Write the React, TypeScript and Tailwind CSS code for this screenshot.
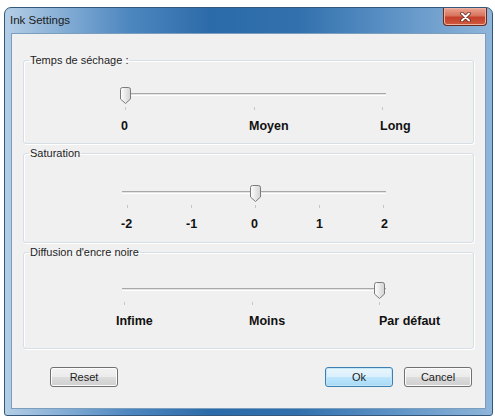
import React from 'react'

type SliderProps = {
    labels: string[]
    value: number
    first: number
    last: number
    tickPad: string
    labelCols: string
}

function Thumb() {
    return (
        <svg width="11" height="18" viewBox="0 0 11 18">
            <defs>
                <linearGradient id="thumbFill" x1="0" y1="0" x2="1" y2="0">
                    <stop offset="0" stopColor="#ffffff" />
                    <stop offset="1" stopColor="#d2d2d2" />
                </linearGradient>
            </defs>
            <path
                d="M0.5 2.5 Q0.5 0.5 2.5 0.5 H8.5 Q10.5 0.5 10.5 2.5 V12 L5.5 16.5 L0.5 12 Z"
                fill="url(#thumbFill)"
                stroke="#7b7b7b"
            />
        </svg>
    )
}

function Slider({ labels, value, first, last, tickPad, labelCols }: SliderProps) {
    const step = (last - first) / (labels.length - 1)
    const center = first + value * step + 0.5
    return (
        <div className="ml-[96px] w-[268px]">
            <div className="relative h-[17px]">
                <div className="absolute left-[2px] right-[2px] top-[6px] h-[3px] border-t border-t-[#a8a8a8] bg-[#e3e3e3] border-b border-b-white" />
                <div className="absolute top-0" style={{ left: center - 5.5 }}>
                    <Thumb />
                </div>
            </div>
            <div className={`mt-[3px] flex justify-between ${tickPad}`}>
                {labels.map((l) => (
                    <span key={l} className="w-px h-[3px] bg-[#c6c6c6]" />
                ))}
            </div>
            <div className={`mt-[9px] grid ${labelCols} text-[12.5px] font-bold leading-[14px] text-[#111]`}>
                {labels.map((l) => (
                    <span key={l} className="whitespace-nowrap">{l}</span>
                ))}
            </div>
        </div>
    )
}

function Group({ title, className, children }: { title: string; className: string; children: React.ReactNode }) {
    return (
        <fieldset
            className={`mx-[11px] rounded-[3px] border border-[#d5dfe5] shadow-[inset_1px_1px_0_#fff,1px_1px_0_#fff] ${className}`}
        >
            <legend className="ml-[5px] px-[1px] text-[11px] leading-[13px] text-[#1e1e1e]">{title}</legend>
            {children}
        </fieldset>
    )
}

function Button({ label, primary }: { label: string; primary?: boolean }) {
    return (
        <button
            className={
                primary
                    ? 'w-[68px] h-[20px] rounded-[3px] border border-[#3c7fb1] bg-[linear-gradient(#eaf6fd_0%,#d9f0fc_50%,#bee6fd_51%,#a7d9f5_100%)] shadow-[inset_0_0_0_1px_#c4e5f6] text-[11px] text-[#1e1e1e]'
                    : 'w-[68px] h-[20px] rounded-[3px] border border-[#707070] bg-[linear-gradient(#f2f2f2_0%,#ebebeb_50%,#dddddd_51%,#cfcfcf_100%)] shadow-[inset_0_0_0_1px_#fcfcfc] text-[11px] text-[#1e1e1e]'
            }
        >
            {label}
        </button>
    )
}

export default function App() {
    return (
        <div className="w-[495px] h-[418px] bg-white pt-[7px] pl-[4px] font-['Liberation_Sans',Arial,sans-serif]">
            <div className="w-[489px] h-[409px] rounded-t-[7px] rounded-b-[3px] border border-[#34587c] bg-[linear-gradient(90deg,#b4cee6_0%,#8db3d8_10%,#4f88c0_25%,#2c6ba9_42%,#3170ad_60%,#5e93c6_80%,#8fb5da_100%)] flex flex-col px-[6px] pb-[6px]">
                {/* title bar */}
                <div className="h-[25px] flex items-start justify-between">
                    <span className="-ml-px mt-[5px] text-[11.5px] leading-[14px] text-[#1b1b1b]">Ink Settings</span>
                    <div className="-mr-px w-[44px] h-[18px] rounded-b-[4px] border border-t-0 border-[#6b2a1e] bg-[linear-gradient(#eaa593_0%,#d9735d_45%,#c4402a_55%,#cf5a3e_100%)] shadow-[inset_0_0_0_1px_#eeb0a0] flex items-center justify-center">
                        <svg width="11" height="10" viewBox="0 0 11 10">
                            <path d="M2 1.5 L9 8.5 M9 1.5 L2 8.5" stroke="#5a1e14" strokeWidth="3.4" strokeLinecap="round" />
                            <path d="M2 1.5 L9 8.5 M9 1.5 L2 8.5" stroke="#ffffff" strokeWidth="2" strokeLinecap="round" />
                        </svg>
                    </div>
                </div>

                {/* client area */}
                <div className="flex-1 bg-[#f0f0f0] border border-[#7b9ebf] flex flex-col">
                    <Group title="Temps de séchage :" className="mt-[20px] pb-[10px]">
                        <div className="mt-[20px]">
                            <Slider
                                labels={['0', 'Moyen', 'Long']}
                                value={0}
                                first={5}
                                last={261}
                                tickPad="px-[5px]"
                                labelCols="grid-cols-[128px_131px_auto] ml-px"
                            />
                        </div>
                    </Group>
                    <Group title="Saturation" className="mt-[3px] pb-[11px]">
                        <div className="mt-[25px]">
                            <Slider
                                labels={['-2', '-1', '0', '1', '2']}
                                value={2}
                                first={7}
                                last={263}
                                tickPad="pl-[7px] pr-[4px]"
                                labelCols="grid-cols-[65px_65px_65px_65px_auto] ml-px"
                            />
                        </div>
                    </Group>
                    <Group title="Diffusion d'encre noire" className="mt-[3px] pb-[20px]">
                        <div className="mt-[23px]">
                            <Slider
                                labels={['Infime', 'Moins', 'Par défaut']}
                                value={2}
                                first={4}
                                last={259}
                                tickPad="pl-[4px] pr-[8px]"
                                labelCols="grid-cols-[133px_130px_auto] -ml-[4px]"
                            />
                        </div>
                    </Group>

                    <div className="mt-[18px] flex justify-between pl-[38px] pr-[13px]">
                        <Button label="Reset" />
                        <div className="flex gap-[11px]">
                            <Button label="Ok" primary />
                            <Button label="Cancel" />
                        </div>
                    </div>
                </div>
            </div>
        </div>
    )
}
